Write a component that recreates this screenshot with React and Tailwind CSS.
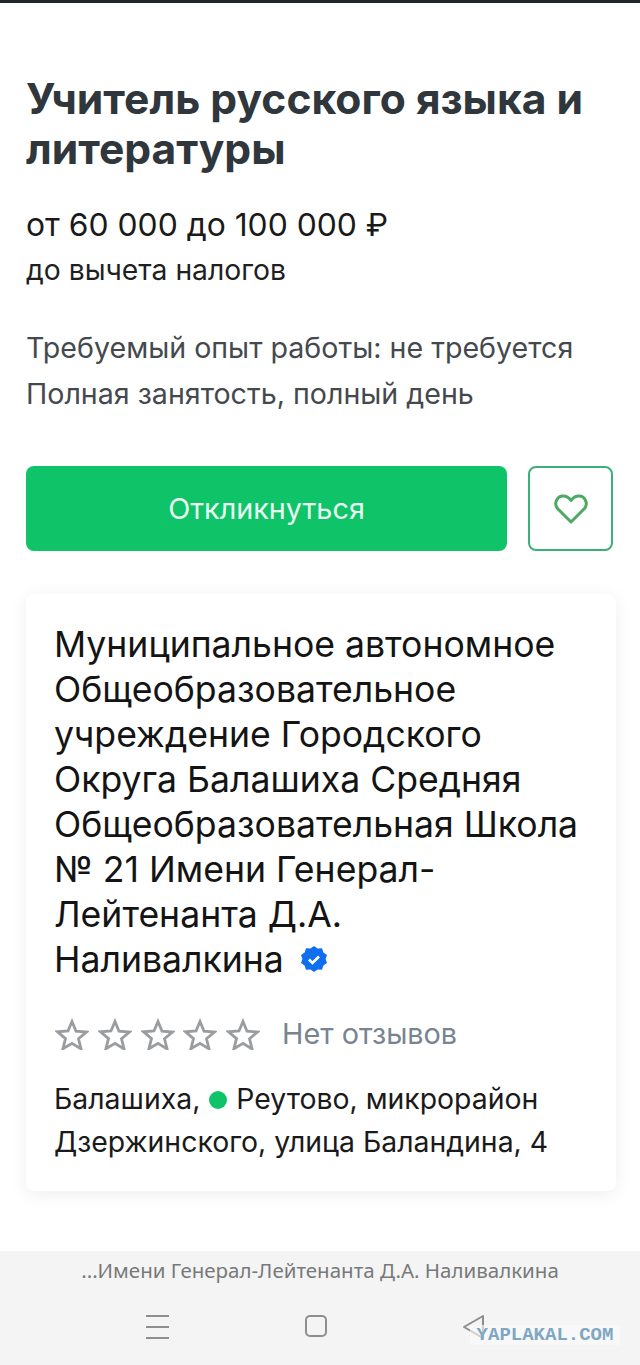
import React from "react";

function Star() {
    return (
        <svg width="34" height="32" viewBox="0 0 34 32" fill="none" stroke="#9a9da0" strokeWidth="2.8" strokeLinejoin="miter">
            <path d="M17 3.500l4 9.700 10.500.8-8 6.800 2.600 10.200L17 25.300l-9.100 5.500 2.600-10.200-8-6.800 10.500-.8z" />
        </svg>
    );
}

export default function App() {
    return (
        <div className="w-[640px] h-[1365px] flex flex-col bg-white font-['Inter','Noto_Sans',sans-serif] overflow-hidden relative">
            <div className="h-[3px] bg-[#22262b]" />

            <div className="flex-1 px-[26px]">
                <h1 className="mt-[71px] text-[42.6px] leading-[50px] font-bold text-[#2f363c]">
                    Учитель русского языка и литературы
                </h1>
                <div className="mt-[29px] text-[31.800px] leading-[44px] text-[#1a1a1a]">от 60 000 до 100 000 ₽</div>
                <div className="mt-[1px] text-[28.300px] leading-[44px] text-[#1f1f1f]">до вычета налогов</div>

                <div className="mt-[33px] text-[28.600px] leading-[46px] text-[#44494e]">
                    <div>Требуемый опыт работы: не требуется</div>
                    <div>Полная занятость, полный день</div>
                </div>

                <div className="mt-[49px] flex gap-[21px]">
                    <button className="w-[481px] h-[85px] rounded-lg bg-[#0fc468] text-[#eafbf2] text-[28.800px]">Откликнуться</button>
                    <button className="w-[85px] h-[85px] rounded-lg border-2 border-[#3bb078] flex items-center justify-center">
                        <svg width="34" height="30" viewBox="0 0 34 30" fill="none" stroke="#4caa64" strokeWidth="3" strokeLinejoin="round">
                            <path d="M17 28L3.500 14.500C-.500 9.500 3 2 9 2c3.500 0 6 1.500 8 4.500C19 3.500 21.500 2 25 2c6 0 9.500 7.500 5.500 12.500z" />
                        </svg>
                    </button>
                </div>

                <div className="mt-[43px] -mr-[2px] h-[597px] rounded-lg bg-white shadow-[0_3px_18px_rgba(0,0,0,0.07)] pl-[29px] pr-[20px] pt-[28px]">
                    <div className="-ml-[1px] text-[35.600px] leading-[45px] text-[#141414]">
                        Муниципальное автономное Общеобразовательное учреждение Городского Округа Балашиха Средняя Общеобразовательная Школа № 21 Имени Генерал-Лейтенанта Д.А.
                        <br />
                        Наливалкина
                        <svg className="inline-block ml-[17px] mb-[6px]" width="26" height="26" viewBox="0 0 26 26">
                            <path
                                fill="#0f6fee"
                                d="M13 0l3.600 2.500 4.400-.300 1.400 4.200 3.600 2.600-1.400 4 1.400 4-3.600 2.600-1.400 4.200-4.400-.300L13 26l-3.600-2.500-4.400.300-1.400-4.200L0 17l1.400-4L0 9l3.600-2.600L5 2.200l4.400.300z"
                            />
                            <path d="M8 13.500l3.500 3.500 6.500-6.500" fill="none" stroke="#fff" strokeWidth="2.600" />
                        </svg>
                    </div>

                    <div className="mt-[32px] flex items-center h-[40px]">
                        <div className="flex gap-[8.750px]">
                            <Star />
                            <Star />
                            <Star />
                            <Star />
                            <Star />
                        </div>
                        <span className="ml-[22px] text-[28.800px] text-[#78848f]">Нет отзывов</span>
                    </div>

                    <div className="mt-[23px] -ml-[1px] text-[28.400px] leading-[43px] text-[#1a1a1a]">
                        Балашиха,
                        <span className="inline-block w-[18px] h-[18px] rounded-full bg-[#0fc468] mx-[9px]" />
                        Реутово, микрорайон Дзержинского, улица Баландина, 4
                    </div>
                </div>
            </div>

            <div className="h-[114px] bg-[#f4f4f4] flex flex-col items-center">
                <div className="mt-[5px] text-[20.500px] leading-[28px] text-[#77797b] font-['Noto_Sans',sans-serif]">
                    ...Имени Генерал-Лейтенанта Д.А. Наливалкина
                </div>
                <div className="mt-[30px] relative w-full h-[30px]">
                    <div className="absolute left-[146px] top-[1px] w-[23px] flex flex-col gap-[9px]">
                        <div className="h-[2px] bg-[#8e8e8e]" />
                        <div className="h-[2px] bg-[#8e8e8e]" />
                        <div className="h-[2px] bg-[#8e8e8e]" />
                    </div>
                    <div className="absolute left-[305px] top-[1px] w-[22px] h-[22px] rounded-[5px] border-2 border-[#8e8e8e]" />
                    <svg className="absolute left-[462px] top-[0px]" width="24" height="26" viewBox="0 0 24 26" fill="none" stroke="#8e8e8e" strokeWidth="2" strokeLinejoin="round">
                        <path d="M21 2L2 13l19 11z" />
                    </svg>
                </div>
            </div>

            <div className="absolute left-[470px] top-[1325px] w-[150px] h-[20px] bg-[#fafafa]/60 flex items-center justify-center text-[19px] leading-[20px] font-bold text-[#7fa6c2] font-['Liberation_Mono',monospace]">
                YAPLAKAL.COM
            </div>
        </div>
    );
}
